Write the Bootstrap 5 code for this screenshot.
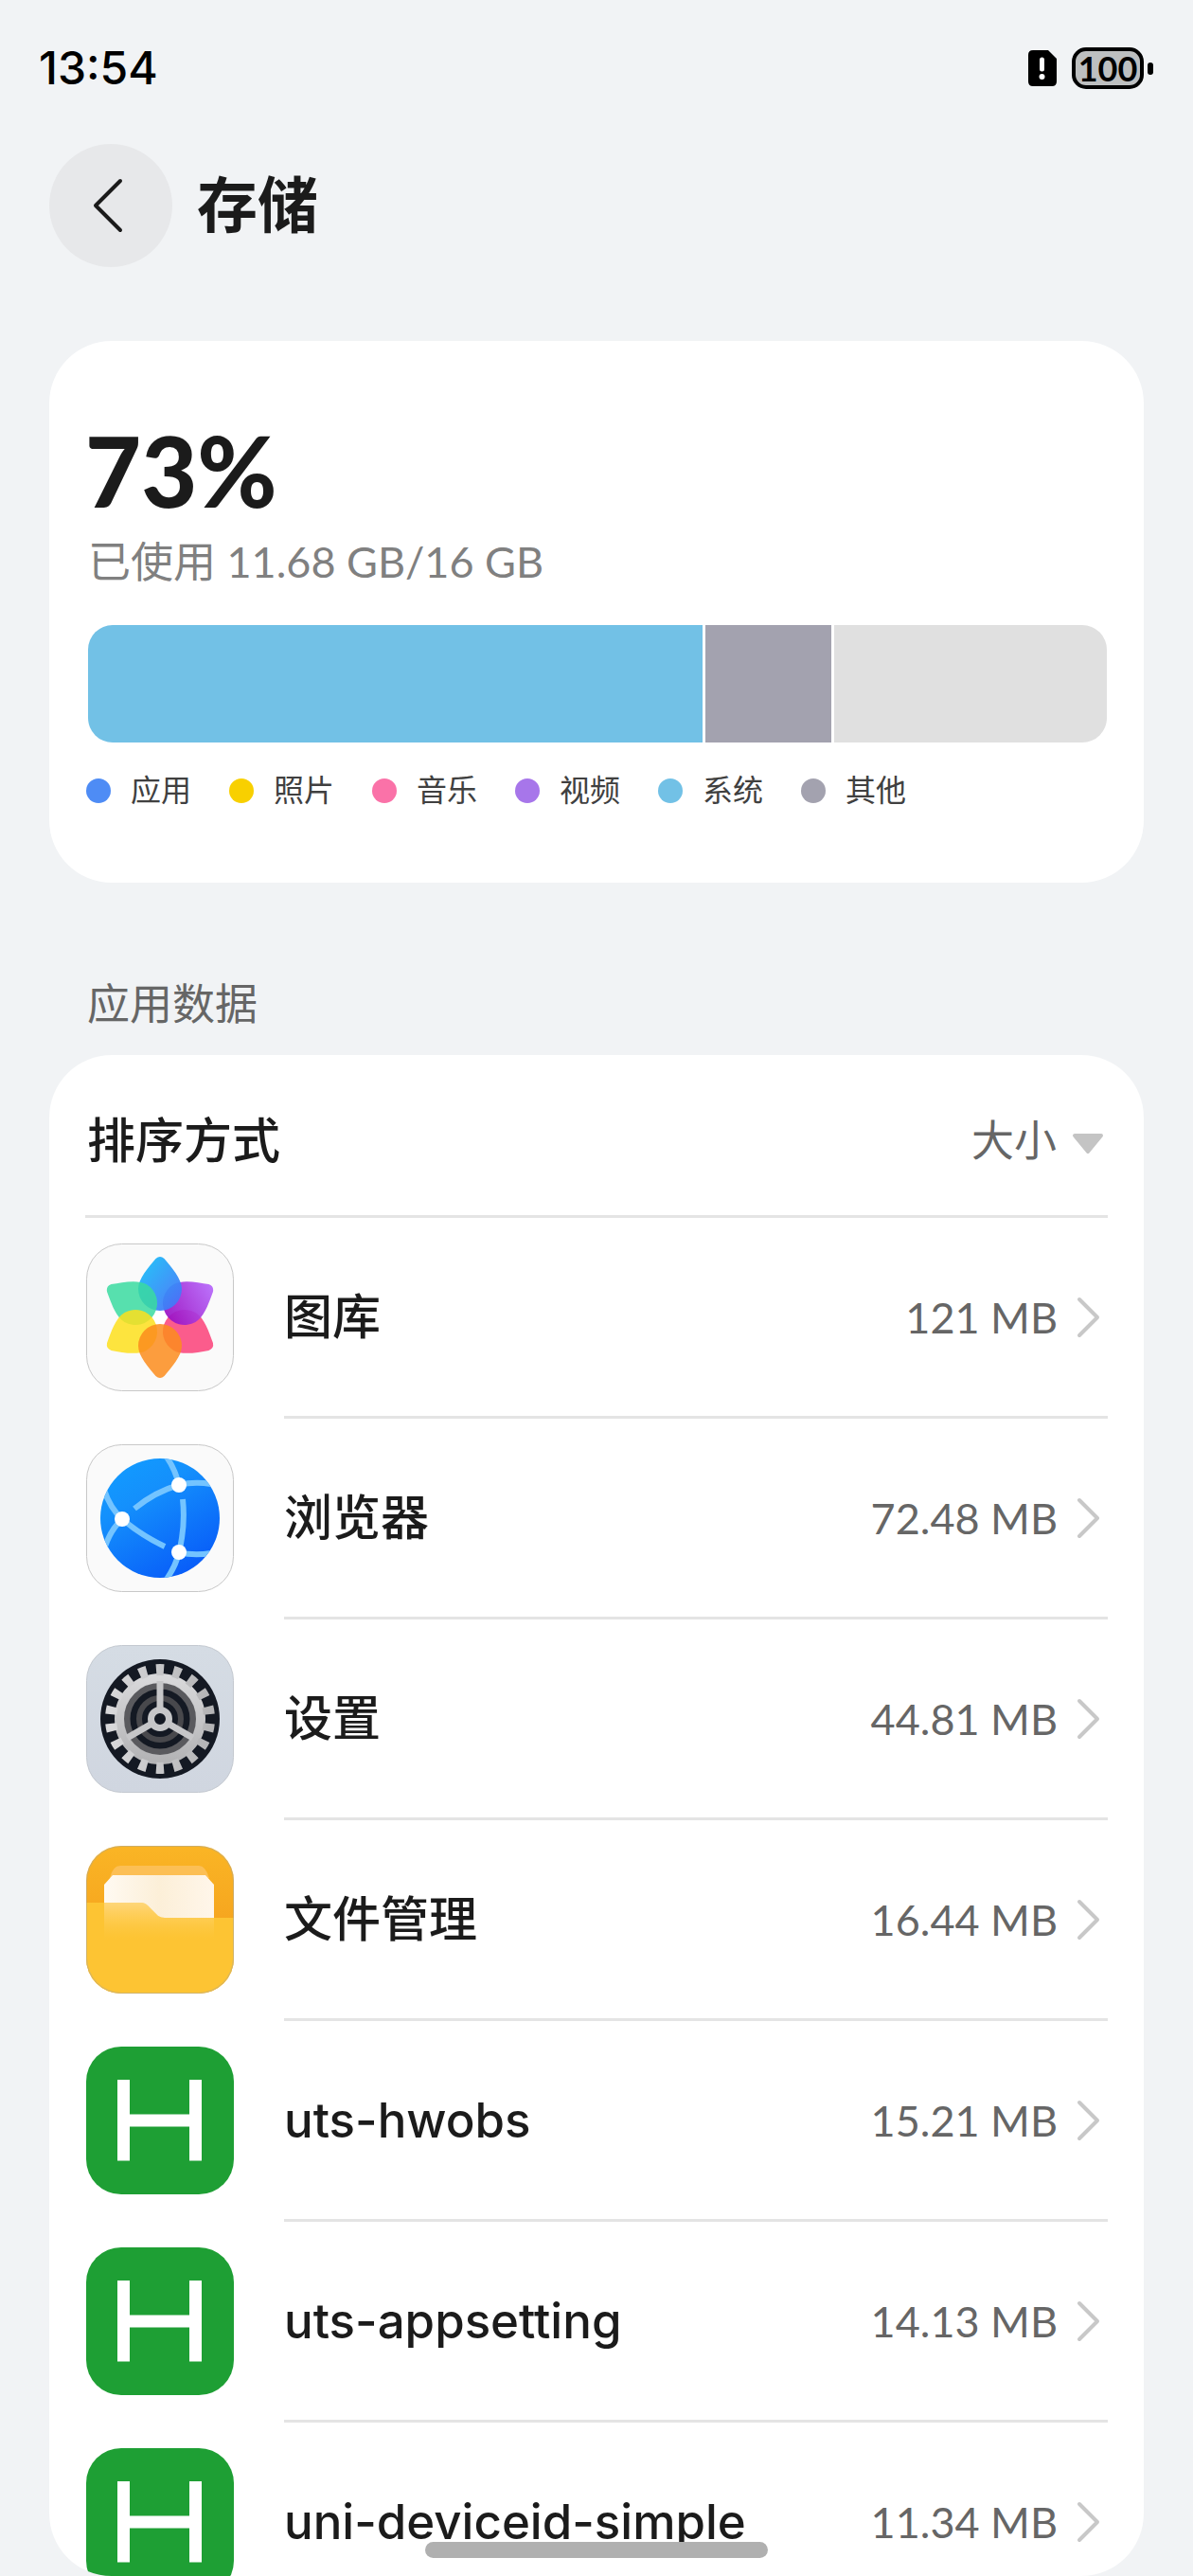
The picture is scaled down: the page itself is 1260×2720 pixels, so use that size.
<!DOCTYPE html>
<html lang="zh-CN">
<head>
<meta charset="utf-8">
<meta name="viewport" content="width=device-width, initial-scale=1">
<title>存储</title>
<link href="https://cdn.jsdelivr.net/npm/bootstrap@5.3.0/dist/css/bootstrap.min.css" rel="stylesheet">
<style>
  body { background: #f1f3f5; color: #1b1b1b; font-family: Inter, "Noto Sans CJK SC", sans-serif; }
  svg { display: block; flex: none; }
  .latin { font-family: Lato, "Noto Sans CJK SC", sans-serif; }

  .status-bar { height: 144px; padding: 0 42px 0 41px; color: #000; }
  .clock { font-size: 48px; line-height: 60px; font-weight: 500; }
  .battery { width: 76px; height: 44px; border: 4px solid #000; border-radius: 15px; background: #bdbfc0; font-size: 36px; line-height: 36px; font-weight: 700; }
  .battery-tip { width: 6px; height: 13px; border-radius: 3px; background: #000; }

  .title-bar { margin-top: 8px; padding: 0 52px; gap: 26px; }
  .btn-back { width: 130px; height: 130px; padding: 0 6px 0 0; background: #e7e8ea; }
  .page-title { font-size: 64px; line-height: 80px; font-weight: 700; }

  .panel { background: #fff; border-radius: 66px; margin: 0 52px; padding: 0 38px; }
  .usage { margin-top: 78px; padding-top: 87px; padding-bottom: 77px; }
  .usage-percent { font-size: 102px; line-height: 100px; font-weight: 900; }
  .usage-detail { margin-top: 16px; font-size: 45px; line-height: 60px; color: #808080; padding-left: 3px; }
  .usage-bar { margin: 37px 1px 0 3px; height: 124px; gap: 3px; border-radius: 26px; overflow: hidden; }
  .usage-legend { margin-top: 31px; gap: 40px; font-size: 32px; line-height: 40px; color: #404040; padding-left: 1px; }
  .legend-label { padding-left: 21px; }
  .dot { width: 26px; height: 26px; }
  .c-app { background: #4e8cf5; } .c-photo { background: #f8d000; } .c-music { background: #fa72a8; }
  .c-video { background: #a776ea; } .c-system { background: #72c1e6; } .c-other { background: #a3a2af; } .c-free { background: #e0e0e0; }

  .section-title { margin: 99px 92px 23px; font-size: 45px; line-height: 60px; font-weight: 400; color: #666; }
  .apps { min-height: 0; overflow-y: auto; scrollbar-width: none; }
  .apps::-webkit-scrollbar { display: none; }
  .sort-row { padding: 61px 0 48px 2px; border-bottom: 3px solid #e4e4e4; font-size: 51px; line-height: 60px; font-weight: 500; }
  .sort-select { appearance: none; border: 0; background: none; padding: 0 53px 0 0; font-size: 45px; line-height: 60px; color: #666; }
  .sort-arrow { position: absolute; right: 3px; top: 20px; pointer-events: none; }
  .app-row { height: 212px; gap: 52px; color: inherit; }
  .app-icon { width: 158px; height: 158px; margin-bottom: 2px; }
  .app-main { border-bottom: 3px solid #e4e4e4; min-width: 0; }
  .app-name { font-size: 51px; line-height: 60px; font-weight: 500; }
  .app-size { font-size: 45px; line-height: 60px; color: #666; gap: 20px; padding-right: 7px; }
  .home-bar { bottom: 19px; width: 362px; height: 17px; background: #b0b0b0; }
</style>
<script src="https://cdn.jsdelivr.net/npm/bootstrap@5.3.0/dist/js/bootstrap.bundle.min.js"></script>
</head>
<body class="vh-100 d-flex flex-column overflow-hidden">

<svg width="0" height="0" class="position-absolute" aria-hidden="true">
  <defs>
    <path id="petal" d="M82.500 16C90 25 101 37 101 48A23 23 0 0 1 55 48C55 37 66 25 73.500 16Q78 12 82.500 16Z"/>
    <symbol id="arrow" viewBox="0 0 26 44"><path d="M3 3 22 22 3 41" fill="none" stroke="#c8c8c8" stroke-width="4" stroke-linecap="round" stroke-linejoin="round"/></symbol>
    <symbol id="hbuilder" viewBox="-1 -1 158 158">
      <rect width="156" height="156" rx="37" fill="#1e9f34"/>
      <path d="M39.500 35V120.500M115.500 35V120.500M39.500 78H115.500" stroke="#fff" stroke-width="13"/>
    </symbol>
    <linearGradient id="gBlue" x1="0" x2="1" y2="1"><stop offset=".2" stop-color="#1eb4f8"/><stop offset="1" stop-color="#4b6cf8"/></linearGradient>
    <linearGradient id="gPurple" x1="0" x2="0" y2="1"><stop offset="0" stop-color="#b565fa"/><stop offset="1" stop-color="#9a10c4"/></linearGradient>
    <linearGradient id="gGlobe" x1=".2" x2=".8" y2="1"><stop offset="0" stop-color="#129bff"/><stop offset=".3" stop-color="#1490fc"/><stop offset="1" stop-color="#0758f8"/></linearGradient>
    <linearGradient id="gTile" x1="0" x2="0" y2="1"><stop offset="0" stop-color="#d5dce4"/><stop offset="1" stop-color="#d0d6e0"/></linearGradient>
    <linearGradient id="gGear" x1="0" x2="0" y2="1"><stop offset="0" stop-color="#d8d8da"/><stop offset="1" stop-color="#b4b4b6"/></linearGradient>
    <linearGradient id="gBack" x1="0" x2="0" y2="1"><stop offset="0" stop-color="#fab525"/><stop offset=".5" stop-color="#f6a61f"/></linearGradient>
    <linearGradient id="gPaper" x1="0" x2="1"><stop offset="0" stop-color="#fffaf2"/><stop offset=".5" stop-color="#fcefd8"/><stop offset="1" stop-color="#fff6ea"/></linearGradient>
    <linearGradient id="gFade" x1="0" x2="0" y2="1"><stop offset="0" stop-color="#ffe0a0" stop-opacity=".65"/><stop offset="1" stop-color="#ffd060" stop-opacity="0"/></linearGradient>
    <clipPath id="clipGlobe"><circle cx="78" cy="78" r="63"/></clipPath>
    <clipPath id="clipTile"><rect width="156" height="156" rx="37"/></clipPath>
  </defs>
</svg>

<header class="flex-shrink-0">
  <div class="status-bar d-flex justify-content-between align-items-center">
    <time class="clock">13:54</time>
    <div class="d-flex align-items-center">
      <svg class="me-3" width="30" height="38" viewBox="0 0 30 38" role="img" aria-label="SIM"><path d="M5 0H21L30 9V33Q30 38 25 38H5Q0 38 0 33V5Q0 0 5 0Z"/><path d="M14.500 10V20" stroke="#fff" stroke-width="5" stroke-linecap="round"/><circle cx="14.500" cy="28" r="3" fill="#fff"/></svg>
      <span class="battery latin d-flex justify-content-center">100</span>
      <span class="battery-tip ms-1"></span>
    </div>
  </div>
  <div class="title-bar d-flex align-items-center">
    <button type="button" class="btn btn-back rounded-circle border-0 d-flex align-items-center justify-content-center" aria-label="返回">
      <svg width="34" height="60" viewBox="0 0 34 60"><path d="M30 4 4 30 30 56" fill="none" stroke="#1b1b1b" stroke-width="4" stroke-linecap="round" stroke-linejoin="round"/></svg>
    </button>
    <h1 class="page-title m-0">存储</h1>
  </div>
</header>

<section class="panel usage flex-shrink-0">
  <div class="usage-percent latin">73%</div>
  <div class="usage-detail latin">已使用 11.68 GB/16 GB</div>
  <div class="usage-bar d-flex">
    <div class="c-system" style="width:60.3%"></div>
    <div class="c-other" style="width:12.4%"></div>
    <div class="c-free flex-grow-1"></div>
  </div>
  <ul class="usage-legend list-unstyled d-flex mb-0">
    <li class="d-flex align-items-center"><span class="dot c-app rounded-circle"></span><span class="legend-label">应用</span></li>
    <li class="d-flex align-items-center"><span class="dot c-photo rounded-circle"></span><span class="legend-label">照片</span></li>
    <li class="d-flex align-items-center"><span class="dot c-music rounded-circle"></span><span class="legend-label">音乐</span></li>
    <li class="d-flex align-items-center"><span class="dot c-video rounded-circle"></span><span class="legend-label">视频</span></li>
    <li class="d-flex align-items-center"><span class="dot c-system rounded-circle"></span><span class="legend-label">系统</span></li>
    <li class="d-flex align-items-center"><span class="dot c-other rounded-circle"></span><span class="legend-label">其他</span></li>
  </ul>
</section>

<h2 class="section-title flex-shrink-0">应用数据</h2>

<section class="panel apps flex-grow-1">
  <div class="sort-row d-flex justify-content-between align-items-center">
    <label for="sort">排序方式</label>
    <div class="position-relative">
      <select id="sort" class="sort-select d-block"><option>大小</option><option>名称</option></select>
      <svg class="sort-arrow" width="36" height="26" viewBox="0 0 36 26"><path d="M4 4H32L18 21Z" fill="#c4c4c4" stroke="#c4c4c4" stroke-width="4" stroke-linejoin="round"/></svg>
    </div>
  </div>

  <a href="#" class="app-row d-flex align-items-center text-decoration-none">
    <svg class="app-icon" viewBox="-1 -1 158 158">
      <rect x=".5" y=".5" width="155" height="155" rx="37" fill="#fafafa" stroke="#c8c8c8"/>
      <circle cx="78" cy="78" r="12" fill="#fff"/>
      <use href="#petal" fill="#fb4a80" opacity=".9" transform="rotate(120 78 78)"/>
      <use href="#petal" fill="url(#gPurple)" opacity=".92" transform="rotate(60 78 78)" />
      <use href="#petal" fill="url(#gBlue)" opacity=".94"/>
      <use href="#petal" fill="#3adba0" opacity=".85" transform="rotate(300 78 78)"/>
      <use href="#petal" fill="#fddf1c" opacity=".85" transform="rotate(240 78 78)"/>
      <use href="#petal" fill="#fb8c1c" opacity=".85" transform="rotate(180 78 78)"/>
    </svg>
    <div class="app-main d-flex flex-grow-1 align-self-stretch align-items-center justify-content-between">
      <span class="app-name">图库</span>
      <span class="app-size latin d-flex align-items-center">121 MB<svg width="26" height="44"><use href="#arrow"/></svg></span>
    </div>
  </a>

  <a href="#" class="app-row d-flex align-items-center text-decoration-none">
    <svg class="app-icon" viewBox="-1 -1 158 158">
      <rect x=".5" y=".5" width="155" height="155" rx="37" fill="#fafafa" stroke="#c8c8c8"/>
      <circle cx="78" cy="78" r="63" fill="url(#gGlobe)"/>
      <g clip-path="url(#clipGlobe)" fill="none" stroke="#74c4ff" stroke-width="6">
        <path d="M84 12Q94 26 98 43Q114 39 132 42M98 43Q73 50 51 68"/>
        <path d="M19 48Q25 67 38 79Q26 90 20 108M38 79Q58 96 83 108"/>
        <path d="M102 58Q105 86 98 114Q113 118 132 115M98 114Q95 128 84 144"/>
      </g>
      <g fill="#fff"><circle cx="98" cy="43" r="8"/><circle cx="38" cy="79" r="8"/><circle cx="98" cy="114" r="8"/></g>
    </svg>
    <div class="app-main d-flex flex-grow-1 align-self-stretch align-items-center justify-content-between">
      <span class="app-name">浏览器</span>
      <span class="app-size latin d-flex align-items-center">72.48 MB<svg width="26" height="44"><use href="#arrow"/></svg></span>
    </div>
  </a>

  <a href="#" class="app-row d-flex align-items-center text-decoration-none">
    <svg class="app-icon" viewBox="-1 -1 158 158">
      <rect x=".5" y=".5" width="155" height="155" rx="37" fill="url(#gTile)" stroke="#c4c9d0"/>
      <circle cx="78" cy="78" r="63" fill="#141923"/>
      <circle cx="78" cy="78" r="35" fill="none" stroke="#5a5a5e" stroke-width="7"/>
      <circle cx="78" cy="78" r="22" fill="none" stroke="#48484c" stroke-width="6"/>
      <g fill="none" stroke="url(#gGear)">
        <circle cx="78" cy="78" r="43" stroke-width="10"/>
        <circle cx="78" cy="78" r="52" stroke-width="12" pathLength="36" stroke-dasharray="0.900 1.100" stroke-dashoffset=".45" transform="rotate(-90 78 78)"/>
      </g>
      <g stroke="#c6c6c8" stroke-width="7"><path d="M78 68V38"/><path d="M78 68V38" transform="rotate(120 78 78)"/><path d="M78 68V38" transform="rotate(240 78 78)"/></g>
      <circle cx="78" cy="78" r="9.500" fill="#141923" stroke="#c6c6c8" stroke-width="7"/>
    </svg>
    <div class="app-main d-flex flex-grow-1 align-self-stretch align-items-center justify-content-between">
      <span class="app-name">设置</span>
      <span class="app-size latin d-flex align-items-center">44.81 MB<svg width="26" height="44"><use href="#arrow"/></svg></span>
    </div>
  </a>

  <a href="#" class="app-row d-flex align-items-center text-decoration-none">
    <svg class="app-icon" viewBox="-1 -1 158 158">
      <g clip-path="url(#clipTile)">
        <rect width="156" height="156" fill="url(#gBack)"/>
        <path d="M25 34Q28 21 36 21H119Q126 21 130 34Z" fill="#fcbf55"/>
        <path d="M19 80V41L28 31H126L135 41V80Z" fill="url(#gPaper)"/>
        <path d="M0 60H57Q62 60 65 63L76 74Q79 76 83 76H156V156H0Z" fill="#fdc433"/>
        <path d="M19 60H57Q62 60 65 63L76 74Q79 76 83 76H135V98H19Z" fill="url(#gFade)"/>
      </g>
      <rect x=".5" y=".5" width="155" height="155" rx="37" fill="none" stroke="#b0a890" stroke-opacity=".6"/>
    </svg>
    <div class="app-main d-flex flex-grow-1 align-self-stretch align-items-center justify-content-between">
      <span class="app-name">文件管理</span>
      <span class="app-size latin d-flex align-items-center">16.44 MB<svg width="26" height="44"><use href="#arrow"/></svg></span>
    </div>
  </a>

  <a href="#" class="app-row d-flex align-items-center text-decoration-none">
    <svg class="app-icon"><use href="#hbuilder"/></svg>
    <div class="app-main d-flex flex-grow-1 align-self-stretch align-items-center justify-content-between">
      <span class="app-name">uts-hwobs</span>
      <span class="app-size latin d-flex align-items-center">15.21 MB<svg width="26" height="44"><use href="#arrow"/></svg></span>
    </div>
  </a>

  <a href="#" class="app-row d-flex align-items-center text-decoration-none">
    <svg class="app-icon"><use href="#hbuilder"/></svg>
    <div class="app-main d-flex flex-grow-1 align-self-stretch align-items-center justify-content-between">
      <span class="app-name">uts-appsetting</span>
      <span class="app-size latin d-flex align-items-center">14.13 MB<svg width="26" height="44"><use href="#arrow"/></svg></span>
    </div>
  </a>

  <a href="#" class="app-row d-flex align-items-center text-decoration-none">
    <svg class="app-icon"><use href="#hbuilder"/></svg>
    <div class="app-main d-flex flex-grow-1 align-self-stretch align-items-center justify-content-between">
      <span class="app-name">uni-deviceid-simple</span>
      <span class="app-size latin d-flex align-items-center">11.34 MB<svg width="26" height="44"><use href="#arrow"/></svg></span>
    </div>
  </a>
</section>

<div class="home-bar position-fixed start-50 translate-middle-x rounded-pill"></div>
</body>
</html>
